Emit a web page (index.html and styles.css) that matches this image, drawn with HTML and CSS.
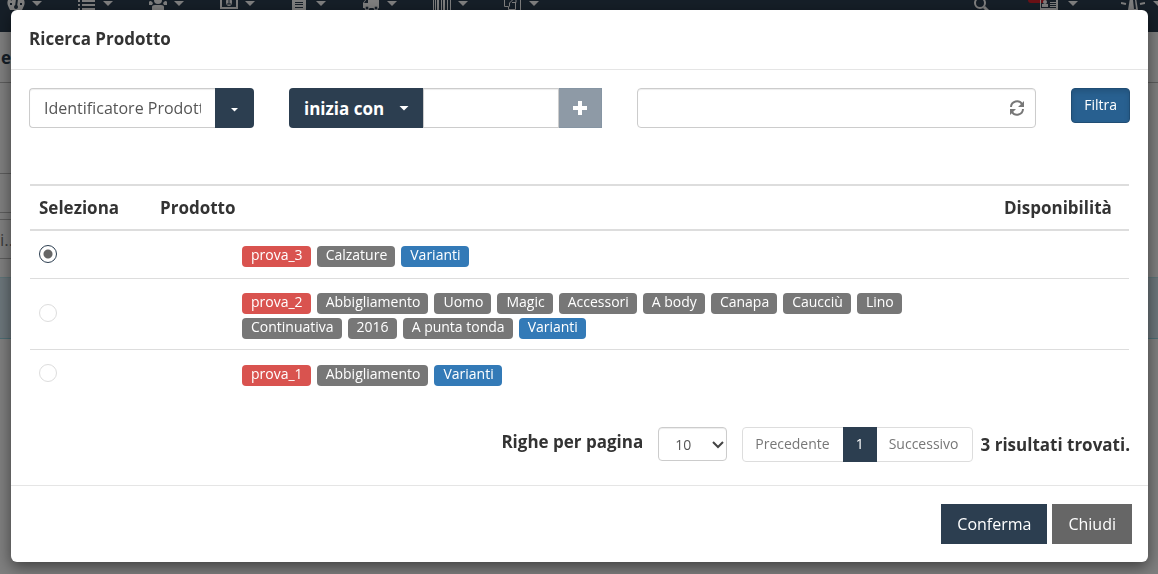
FILE: index.html
```html
<!DOCTYPE html>
<html lang="it">

<head>
    <meta charset="UTF-8">
    <meta name="viewport" content="width=device-width, initial-scale=1.0">
    <title>Ricerca Prodotto</title>
    <link rel="stylesheet" href="styles.css">
</head>

<body>
    <div class="page" aria-hidden="true">
        <div class="navbar">
            <div class="nav-item">
                <svg class="nav-icon" viewBox="0 6 18 12"><path fill="#fff" d="M9 0a9 9 0 0 0-7 14l1 2h12l1-2A9 9 0 0 0 9 0z"/><path stroke="#2c3e50" stroke-width="2" fill="none" d="M9 13l1-8M3 10h2M13 10h2M4 5l1 1"/><circle cx="9" cy="13" r="2" fill="#2c3e50"/></svg>
                <span class="caret"></span>
            </div>
            <div class="nav-item">
                <svg class="nav-icon" viewBox="0 6 18 12"><path stroke="#fff" stroke-width="2" d="M0 7h2M4 7h13M0 11h2M4 11h13M0 15h2M4 15h13"/></svg>
                <span class="caret"></span>
            </div>
            <div class="nav-item">
                <svg class="nav-icon" viewBox="0 6 18 12"><circle cx="9" cy="6" r="4" fill="#fff"/><path fill="#fff" d="M3 16v-3q0-2 3-2h6q3 0 3 2v3zM0 11V8q0-1 2-1l2 2-1 2zM18 11V8q0-1-2-1l-2 2 1 2z"/></svg>
                <span class="caret"></span>
            </div>
            <div class="nav-item">
                <svg class="nav-icon" viewBox="0 6 18 12"><rect x="1" y="3" width="16" height="11" fill="none" stroke="#fff" stroke-width="2"/><ellipse cx="9" cy="8" rx="3" ry="4" fill="#fff"/><path stroke="#2c3e50" d="M9 6v4M7 10h4"/></svg>
                <span class="caret"></span>
            </div>
            <div class="nav-item">
                <svg class="nav-icon" viewBox="0 6 18 12"><path fill="#fff" d="M1 0h8v6h6v10H1z"/><path stroke="#2c3e50" stroke-width="1" d="M4 8.500h8M4 10.500h8M4 13.500h8"/></svg>
                <span class="caret"></span>
            </div>
            <div class="nav-item">
                <svg class="nav-icon" viewBox="0 6 18 12"><path fill="#fff" d="M7 3h10v11H1V9l3-4h3z"/><path fill="#2c3e50" d="M2 9l2-3h2v3z"/><circle cx="5" cy="14" r="2" fill="#2c3e50" stroke="#fff"/><circle cx="14" cy="14" r="2" fill="#2c3e50" stroke="#fff"/></svg>
                <span class="caret"></span>
            </div>
            <div class="nav-item">
                <svg class="nav-icon" viewBox="0 6 18 12"><path stroke="#fff" d="M.5 2v14M2.500 2v14M4.500 2v14M5.500 2v14M8.500 2v14M10.500 2v14M11.500 2v14M14.500 2v14M17.500 2v14"/></svg>
                <span class="caret"></span>
            </div>
            <div class="nav-item">
                <svg class="nav-icon" viewBox="0 6 18 12"><path fill="none" stroke="#fff" stroke-width="1" d="M5.500 5.500h-5v7h4v3h7V8.500M5.500 12.500V9l5-5M16.500 2v14M8 8.500h4v-4"/></svg>
                <span class="caret"></span>
            </div>
            <div class="nav-right">
                <svg class="nav-icon" viewBox="0 6 18 12"><circle cx="8" cy="9" r="5" fill="none" stroke="#fff" stroke-width="2"/><path stroke="#fff" stroke-width="3" d="M12 13l4 4"/></svg>
                <div class="nav-user">
                    <span class="badge"></span>
                    <svg class="nav-icon" viewBox="0 6 18 12"><rect x="0" y="3" width="17" height="12" fill="none" stroke="#fff" stroke-width="2"/><circle cx="5" cy="8" r="2" fill="#fff"/><path fill="#fff" d="M2 13v-3h6v3z"/><path stroke="#fff" d="M10 8.500h6M10 10.500h6M10 12.500h6"/></svg>
                    <span class="caret"></span>
                </div>
                <svg class="nav-beacon" viewBox="0 6 24 12"><path fill="#fff" d="M9 4h6l2 12H7z"/><path stroke="#2c3e50" stroke-width="2" d="M13 6l1 9"/><path stroke="#fff" stroke-width="2" d="M0 9l5 1M24 9l-5 1"/></svg>
                <span class="caret"></span>
            </div>
        </div>
        <div class="page-title">e</div>
        <div class="page-tabs"></div>
        <div class="page-filter">i...</div>
        <div class="page-row"></div>
    </div>

    <div class="backdrop"></div>

    <div class="modal" role="dialog" aria-labelledby="titolo">
        <div class="modal-header">
            <h4 id="titolo">Ricerca Prodotto</h4>
        </div>

        <div class="modal-body">
            <form class="filters">
                <div class="group group-field">
                    <input type="text" class="form-control" aria-label="Campo" value="Identificatore Prodotto">
                    <button type="button" class="btn-dark btn-toggle" aria-label="Scegli campo"><span class="caret caret-small"></span></button>
                </div>
                <div class="group group-operator">
                    <button type="button" class="btn-dark btn-operator">inizia con <span class="caret"></span></button>
                    <input type="text" class="form-control" aria-label="Valore">
                    <button type="button" class="btn-add" aria-label="Aggiungi">
                        <svg width="14" height="14" viewBox="0 0 14 14"><path stroke="#fff" stroke-width="4" d="M7 0v14M0 7h14"/></svg>
                    </button>
                </div>
                <div class="group group-search">
                    <input type="text" class="form-control" aria-label="Filtri attivi">
                    <button type="button" class="btn-refresh" aria-label="Ricarica">
                        <svg width="16" height="16" viewBox="0 0 16 16"><path fill="none" stroke="#777" stroke-width="2" d="M2 7a6 6 0 0 1 11-3M14 9a6 6 0 0 1-11 3"/><path fill="#777" d="M15 1v6H9zM1 15V9h6z"/></svg>
                    </button>
                </div>
                <button type="submit" class="btn-filter">Filtra</button>
            </form>

            <table class="products">
                <thead>
                    <tr>
                        <th class="col-select">Seleziona</th>
                        <th>Prodotto</th>
                        <th class="col-stock">Disponibilità</th>
                    </tr>
                </thead>
                <tbody>
                    <tr>
                        <td><input type="radio" name="prodotto" aria-label="prova_3" checked></td>
                        <td>
                            <div class="labels">
                                <span class="label label-code">prova_3</span>
                                <span class="label">Calzature</span>
                                <span class="label label-variant">Varianti</span>
                            </div>
                        </td>
                        <td></td>
                    </tr>
                    <tr>
                        <td><input type="radio" name="prodotto" aria-label="prova_2"></td>
                        <td>
                            <div class="labels">
                                <span class="label label-code">prova_2</span>
                                <span class="label">Abbigliamento</span>
                                <span class="label">Uomo</span>
                                <span class="label">Magic</span>
                                <span class="label">Accessori</span>
                                <span class="label">A body</span>
                                <span class="label">Canapa</span>
                                <span class="label">Caucciù</span>
                                <span class="label">Lino</span>
                                <span class="label">Continuativa</span>
                                <span class="label">2016</span>
                                <span class="label">A punta tonda</span>
                                <span class="label label-variant">Varianti</span>
                            </div>
                        </td>
                        <td></td>
                    </tr>
                    <tr>
                        <td><input type="radio" name="prodotto" aria-label="prova_1"></td>
                        <td>
                            <div class="labels">
                                <span class="label label-code">prova_1</span>
                                <span class="label">Abbigliamento</span>
                                <span class="label label-variant">Varianti</span>
                            </div>
                        </td>
                        <td></td>
                    </tr>
                </tbody>
            </table>

            <div class="paging">
                <label for="righe">Righe per pagina</label>
                <div class="select-wrap">
                    <select id="righe">
                        <option>10</option>
                        <option>25</option>
                        <option>50</option>
                    </select>
                    <svg class="select-arrow" width="12" height="8" viewBox="0 0 12 8"><path fill="none" stroke="#444" stroke-width="2" d="M1 1l5 5 5-5"/></svg>
                </div>
                <div class="pagination">
                    <a href="#">Precedente</a>
                    <a href="#" class="active">1</a>
                    <a href="#">Successivo</a>
                </div>
                <strong>3 risultati trovati.</strong>
            </div>
        </div>

        <div class="modal-footer">
            <button type="button" class="btn-dark">Conferma</button>
            <button type="button" class="btn-close">Chiudi</button>
        </div>
    </div>
</body>

</html>
```
FILE: styles.css
```css
* {
    box-sizing: border-box;
}

body {
    margin: 0;
    min-height: 100vh;
    padding: 10px 10px 12px 11px;
    font-family: "Open Sans", "Noto Sans", sans-serif;
    font-size: 17px;
    line-height: 24px;
    color: #333;
    background-color: #fff;
}

input,
select,
button {
    font-family: inherit;
    font-size: 16px;
}

button {
    border: none;
    cursor: pointer;
}

/* Pagina sotto la finestra */
.page {
    position: absolute;
    inset: 0;
    overflow: hidden;
}

.navbar {
    display: flex;
    align-items: flex-start;
    height: 32px;
    padding-left: 7px;
    background-color: #2c3e50;
}

.nav-item {
    display: flex;
    flex: none;
    gap: 7px;
    width: 71px;
}

.nav-icon {
    width: 18px;
    height: 12px;
    flex: none;
}

.nav-beacon {
    width: 24px;
    height: 12px;
    margin-right: 8px;
}

.nav-right {
    display: flex;
    flex: none;
    margin-left: auto;
    margin-right: -5px;
}

.nav-user {
    display: flex;
    gap: 10px;
    margin: 0 43px 0 38px;
}

.badge {
    width: 18px;
    height: 3px;
    margin-right: -16px;
    border-radius: 0 0 9px 9px;
    background-color: #d9232d;
}

.caret {
    display: inline-block;
    width: 10px;
    height: 5px;
    background-color: #fff;
    clip-path: polygon(0 0, 100% 0, 50% 100%);
}

.caret-small {
    width: 8px;
    height: 4px;
}

.navbar .caret {
    margin-top: 1px;
}

.page-title {
    height: 51px;
    padding: 14px 0 0 1px;
    border-bottom: 1px solid #bbb;
    font-weight: bold;
    color: #2c3e50;
}

.page-tabs {
    width: 50%;
    height: 40px;
    margin-top: 90px;
    border-top: 1px solid #bbb;
    border-bottom: 1px solid #bbb;
}

.page-filter {
    width: 50%;
    height: 40px;
    margin: 6px 0 18px;
    padding-top: 8px;
    border-top: 1px solid #bbb;
    border-bottom: 1px solid #bbb;
    color: #777;
}

.page-row {
    height: 62px;
    border-top: 1px solid #bce8f1;
    border-bottom: 1px solid #9adbe8;
    background-color: #d9edf7;
}

.backdrop {
    position: fixed;
    inset: 0;
    background-color: rgba(0, 0, 0, 0.5);
}

/* Finestra */
.modal {
    position: relative;
    border-radius: 6px;
    background-color: #fff;
    box-shadow: 0 5px 15px rgba(0, 0, 0, 0.5);
}

.modal-header {
    padding: 17px 18px 18px;
    border-bottom: 1px solid #e5e5e5;
}

.modal-header h4 {
    margin: 0;
    font-size: 17px;
    font-weight: bold;
}

.modal-body {
    padding: 18px 18px 23px;
}

.filters {
    display: flex;
    align-items: flex-start;
    gap: 35px;
}

.group {
    display: flex;
    height: 40px;
}

.group-field {
    width: 225px;
}

.group-operator {
    width: 313px;
}

.group-search {
    position: relative;
    flex: 1;
}

.form-control {
    flex: 1;
    min-width: 0;
    padding: 0 14px;
    border: 1px solid #ccc;
    border-radius: 4px;
    color: #555;
    background-color: #fff;
    box-shadow: inset 0 1px 1px rgba(0, 0, 0, 0.075);
}

.group-field .form-control {
    border-right: none;
    border-radius: 4px 0 0 4px;
}

.group-operator .form-control {
    border-radius: 0;
}

.btn-dark {
    color: #fff;
    background-color: #2c3e50;
}

.btn-toggle {
    display: flex;
    align-items: center;
    justify-content: center;
    width: 39px;
    padding: 3px 0 0;
    border-radius: 0 4px 4px 0;
}

.btn-operator {
    display: flex;
    align-items: center;
    justify-content: space-between;
    width: 134px;
    padding: 0 14px 0 15px;
    border-radius: 4px 0 0 4px;
    font-size: 17px;
    font-weight: bold;
}

.btn-add {
    display: flex;
    align-items: center;
    justify-content: center;
    width: 43px;
    padding: 0;
    border: 1px solid #8695a3;
    border-left: none;
    background-color: #8e9aa6;
}

.btn-refresh {
    position: absolute;
    top: 0;
    right: 0;
    height: 40px;
    padding: 4px 11px 0;
    background-color: transparent;
}

.btn-filter {
    height: 35px;
    padding: 0 12px 2px;
    border: 1px solid #204d74;
    border-radius: 4px;
    font-size: 14px;
    color: #fff;
    background-color: #286090;
    box-shadow: inset 0 3px 5px rgba(0, 0, 0, 0.125);
}

.products {
    width: calc(100% - 2px);
    margin: 56px 1px 0;
    border-collapse: separate;
    border-spacing: 0;
    table-layout: fixed;
}

.products th {
    height: 47px;
    padding: 0 9px;
    border-top: 2px solid #ddd;
    border-bottom: 2px solid #ddd;
    text-align: left;
}

.products td {
    height: 48px;
    padding: 14px 9px 10px;
    border-bottom: 1px solid #ddd;
}

.products td:first-child {
    padding: 0 9px 2px;
}

.products tbody tr:last-child td {
    height: 47px;
    border-bottom: none;
}

.products .col-select {
    width: 121px;
}

.products .col-stock {
    width: 134px;
}

.products input[type="radio"] {
    display: block;
    appearance: none;
    width: 18px;
    height: 18px;
    margin: 0;
    border: 1px solid #ddd;
    border-radius: 50%;
    background-color: #fff;
}

.products input[type="radio"]:checked {
    border-color: #2c3e50;
    background-image: radial-gradient(circle, #666 4px, transparent 5px);
}

.labels {
    display: flex;
    flex-wrap: wrap;
    gap: 4px 6px;
    margin-left: 82px;
}

.label {
    height: 21px;
    padding: 0 8px 0 9px;
    border-radius: 4px;
    font-size: 14px;
    line-height: 18px;
    color: #fff;
    background-color: #777;
}

.label-code {
    background-color: #d9534f;
}

.label-variant {
    background-color: #337ab7;
}

.paging {
    display: flex;
    align-items: flex-start;
    justify-content: flex-end;
    margin-top: 30px;
}

.paging label {
    margin-right: 15px;
    padding-top: 3px;
    font-weight: bold;
}

.paging strong {
    padding-top: 6px;
}

.select-wrap {
    position: relative;
    margin-right: 15px;
}

.select-wrap select {
    display: block;
    appearance: none;
    width: 69px;
    height: 34px;
    padding: 0 16px;
    border: 1px solid #ccc;
    border-radius: 4px;
    font-size: 14px;
    color: #555;
    background-color: #fff;
    box-shadow: inset 0 1px 1px rgba(0, 0, 0, 0.075);
}

.select-arrow {
    position: absolute;
    top: 14px;
    right: 3px;
    pointer-events: none;
}

.pagination {
    display: flex;
    margin-right: 8px;
    border: 1px solid #ddd;
    border-radius: 4px;
    font-size: 14px;
    line-height: 32px;
    padding-bottom: 1px;
}

.pagination a {
    padding: 0 13px 0 12px;
    color: #777;
    text-decoration: none;
}

.pagination .active {
    margin: -1px 0 -2px;
    padding: 0 13px;
    line-height: 34px;
    color: #fff;
    background-color: #2c3e50;
}

.modal-footer {
    display: flex;
    justify-content: flex-end;
    gap: 5px;
    padding: 18px 16px;
    border-top: 1px solid #e5e5e5;
}

.modal-footer button {
    height: 40px;
    padding: 0 16px;
}

.btn-close {
    color: #fff;
    background-color: #666;
}
```
